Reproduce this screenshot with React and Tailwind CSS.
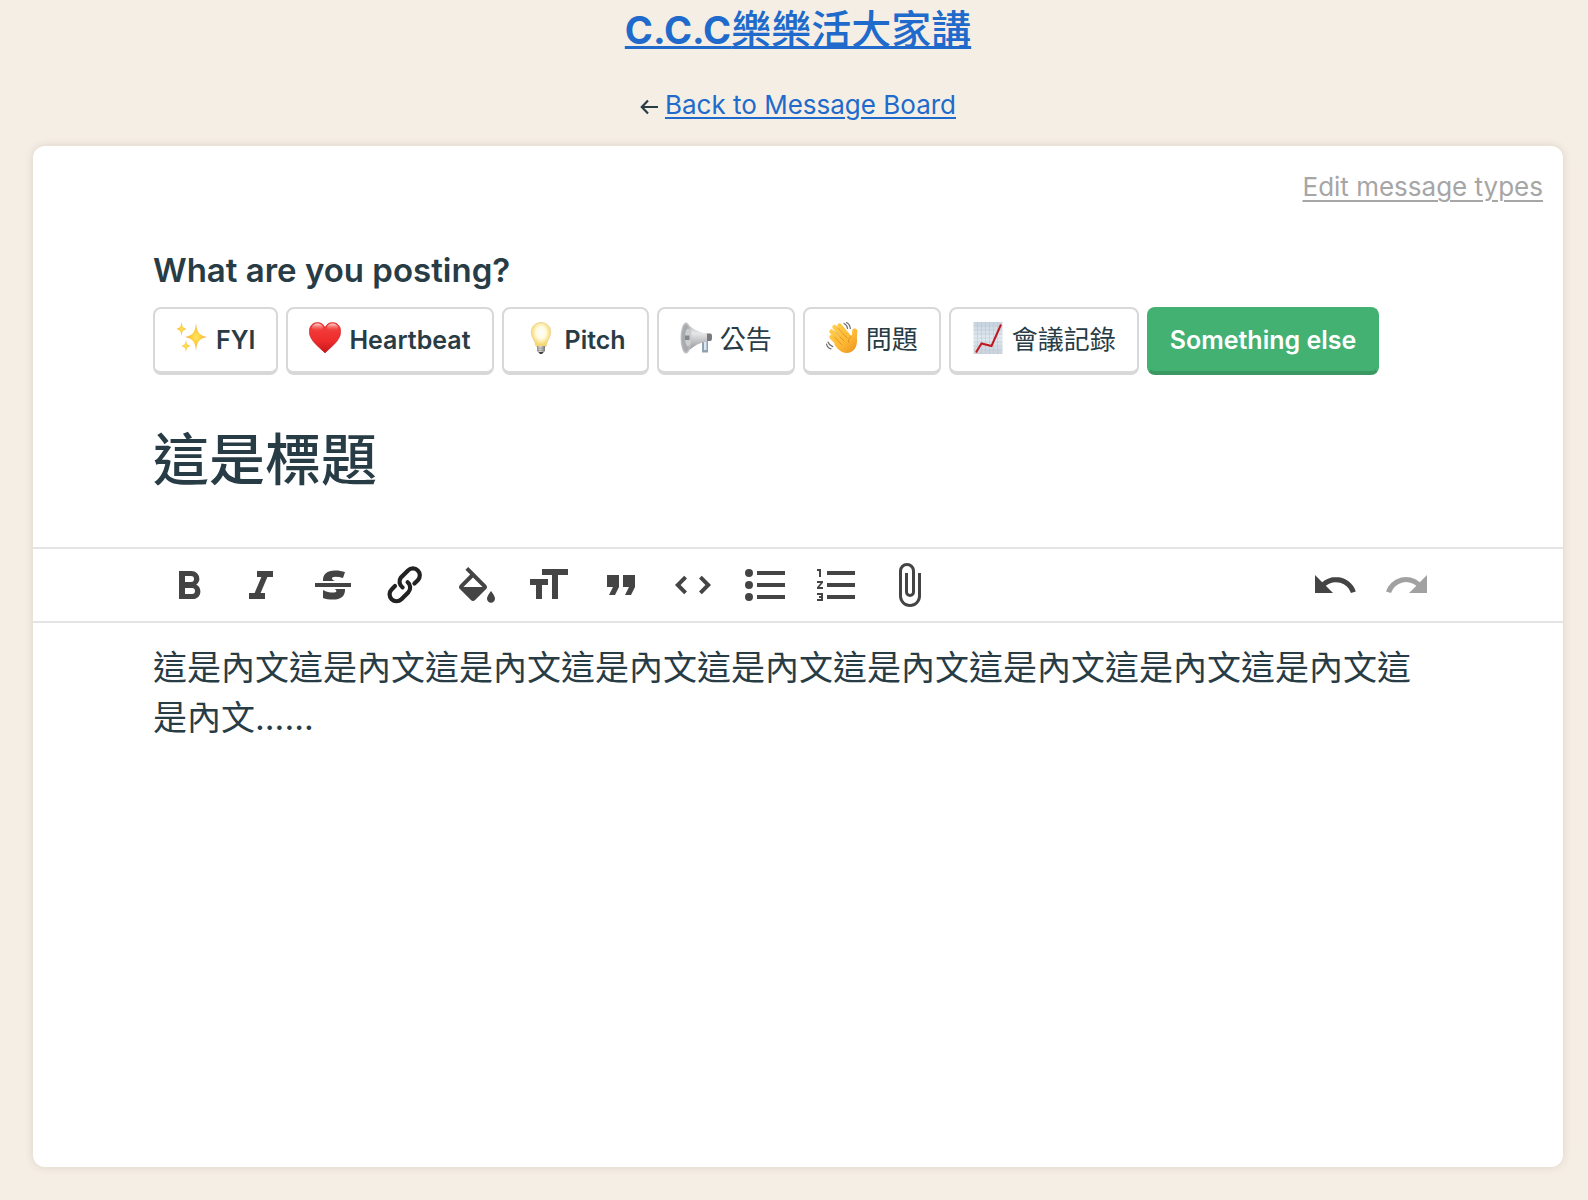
import React, { useState } from "react";

const BODY =
  "這是內文這是內文這是內文這是內文這是內文這是內文這是內文這是內文這是內文這是內文......";

function Sparkles() {
  return (
    <svg viewBox="0 0 32 32" className="mb-1 size-8" aria-hidden="true">
      <defs>
        <radialGradient id="spark">
          <stop offset="0" stopColor="#ffe45c" />
          <stop offset="0.5" stopColor="#fccb3c" />
          <stop offset="1" stopColor="#f3a45c" />
        </radialGradient>
      </defs>
      <g fill="url(#spark)">
        <path d="M20 1c.9 9 2.500 11.800 11 14-8.500 2.200-10.100 5-11 14-.9-9-2.500-11.800-11-14 8.500-2.200 10.100-5 11-14z" />
        <path d="M5.500 0c.6 4.500 1.500 5.900 5 7-3.500 1.100-4.400 2.500-5 7-.6-4.500-1.500-5.900-5-7 3.500-1.100 4.400-2.500 5-7z" />
        <path d="M10 18c.5 4 1.500 5.100 5 6-3.500.9-4.500 2-5 6-.5-4-1.500-5.100-5-6 3.500-.9 4.500-2 5-6z" />
      </g>
    </svg>
  );
}

function Heart() {
  return (
    <svg viewBox="0 0 32 32" className="mb-1 size-8" aria-hidden="true">
      <defs>
        <linearGradient id="heartFill" x1="0" y1="0" x2="0" y2="1">
          <stop offset="0" stopColor="#f4433f" />
          <stop offset="0.6" stopColor="#ee2c2c" />
          <stop offset="1" stopColor="#c4161c" />
        </linearGradient>
        <linearGradient id="heartShine" x1="0" y1="0" x2="0" y2="1">
          <stop offset="0" stopColor="#ffd9d4" />
          <stop offset="1" stopColor="#f4433f" stopOpacity="0" />
        </linearGradient>
      </defs>
      <path
        d="M16 31C11 25.500.3 19 .3 9.500.3 4 4 .6 8.500.6c3.500 0 6.100 1.900 7.500 5 1.400-3.100 4-5 7.500-5 4.500 0 8.200 3.400 8.200 8.900C31.700 19 21 25.500 16 31z"
        fill="url(#heartFill)"
        stroke="#c9181d"
        strokeWidth="0.6"
      />
      <ellipse cx="8.500" cy="5.500" rx="5.500" ry="4" fill="url(#heartShine)" />
      <ellipse cx="23.500" cy="5.500" rx="5.500" ry="4" fill="url(#heartShine)" />
    </svg>
  );
}

function Bulb() {
  return (
    <svg viewBox="0 0 32 32" className="mb-1 size-8" aria-hidden="true">
      <defs>
        <radialGradient id="bulbGlow" cx="0.5" cy="0.42">
          <stop offset="0" stopColor="#ffffff" />
          <stop offset="0.5" stopColor="#fffbe0" />
          <stop offset="1" stopColor="#f6d873" />
        </radialGradient>
        <linearGradient id="bulbBase">
          <stop offset="0" stopColor="#8f8f8d" />
          <stop offset="0.4" stopColor="#dededb" />
          <stop offset="1" stopColor="#77777a" />
        </linearGradient>
      </defs>
      <path
        d="M16 .5c5.800 0 9.700 4.300 9.700 9.700 0 5.400-3.700 7.600-4.700 14.300H11C10 17.800 6.300 15.600 6.300 10.200 6.300 4.800 10.200.5 16 .5z"
        fill="url(#bulbGlow)"
        stroke="#efd28a"
        strokeWidth="0.8"
      />
      <path d="M12 24h8v5l-2.500 2.500h-3L12 29z" fill="url(#bulbBase)" />
      <path d="M12 26.200h8M12 28.400h8" stroke="#8a8a88" strokeWidth="0.6" />
      <path d="M13.500 30h5l-1.500 2h-2z" fill="#3f3f42" />
    </svg>
  );
}

function Loudspeaker() {
  return (
    <svg viewBox="0 0 32 32" className="mb-1 size-8" aria-hidden="true">
      <defs>
        <linearGradient id="horn" x1="0" y1="0" x2="0" y2="1">
          <stop offset="0" stopColor="#aeb0b3" />
          <stop offset="0.35" stopColor="#e6e7e9" />
          <stop offset="1" stopColor="#858689" />
        </linearGradient>
      </defs>
      <path d="M22 15h6v15.500h-6z" fill="#8fa2b3" />
      <path d="M24 17h2.500v11H24z" fill="#dbe7f0" />
      <path d="M26 11.500h4.500c1 0 1.500 1 1.500 3.500s-.5 4-1.500 4H26z" fill="#77797d" />
      <path d="M5.500.5C11 5 16 10 27 11.500v8C16 21 11 27 5.500 31.500z" fill="url(#horn)" />
      <ellipse cx="6" cy="16" rx="5.500" ry="15.500" fill="#c2c3c6" />
      <ellipse cx="6" cy="16" rx="4.300" ry="13.800" fill="#a9aaad" />
      <ellipse cx="8" cy="15.500" rx="3" ry="9" fill="#cdced0" />
      <path d="M5 13.500h4.500v4.500H5z" fill="#85868a" />
    </svg>
  );
}

function Wave() {
  return (
    <svg viewBox="0 0 32 32" className="mb-1 size-8" aria-hidden="true">
      <defs>
        <linearGradient id="hand" gradientUnits="userSpaceOnUse" x1="4" y1="3" x2="28" y2="31">
          <stop offset="0" stopColor="#ffd04f" />
          <stop offset="0.6" stopColor="#fdb934" />
          <stop offset="1" stopColor="#ee9520" />
        </linearGradient>
      </defs>
      <g stroke="url(#hand)" strokeWidth="4.400" strokeLinecap="round">
        <path d="M5.500 9.500 15 20" />
        <path d="M8.500 5 19 17" />
        <path d="M13.500 3.500 23 15" />
        <path d="M5.500 15 13 23" />
      </g>
      <path
        d="M10 18 20 9.500l5.500 4.500c.8-1.700.5-4 .8-6 .3-2 4.400-2.300 4.900.3.5 2.600-.6 5.700-.2 9.200C31.500 24 28 31 20.500 31 15 31 10.500 26 8.500 22.500z"
        fill="url(#hand)"
      />
      <path
        d="M9 9.500l9 9.500M12 6l9 10M8.500 15l7 7.500M25.500 14c-2.500 2-3.500 4-3 6.500"
        fill="none"
        stroke="#dc8a1e"
        strokeWidth="0.8"
        strokeLinecap="round"
      />
      <path
        d="M18 1.500c2 1 3.300 2.800 3.500 5M20.500.5c2.300 1.200 3.700 3.200 3.800 6M.5 22c.5 2.500 2 4.200 4.500 4.800M2 20c.8 2.300 2.300 3.800 4.700 4.600"
        fill="none"
        stroke="#6b6b6b"
        strokeWidth="1.200"
        strokeLinecap="round"
      />
    </svg>
  );
}

function Chart() {
  return (
    <svg viewBox="0 0 32 32" className="mb-1 size-8" aria-hidden="true">
      <defs>
        <linearGradient id="paper" x1="0" y1="0" x2="0" y2="1">
          <stop offset="0" stopColor="#c5d3df" />
          <stop offset="0.5" stopColor="#e3ebf1" />
          <stop offset="1" stopColor="#c9d2da" />
        </linearGradient>
      </defs>
      <path d="M1.500 0h29v32h-29z" fill="url(#paper)" />
      <path
        d="M5.500 0v32M9.500 0v32M13.500 0v32M17.500 0v32M21.500 0v32M25.500 0v32M1.500 4h29M1.500 8h29M1.500 12h29M1.500 16h29M1.500 20h29M1.500 24h29M1.500 28h29"
        stroke="#b3c4d2"
        strokeWidth="0.5"
      />
      <path d="M4 30.500 9.500 21.500l10 2.500L29 2.500" fill="none" stroke="#c3161f" strokeWidth="2" />
    </svg>
  );
}

const TYPES = [
  { label: "FYI", Emoji: Sparkles },
  { label: "Heartbeat", Emoji: Heart },
  { label: "Pitch", Emoji: Bulb },
  { label: "公告", Emoji: Loudspeaker, cjk: true },
  { label: "問題", Emoji: Wave, cjk: true },
  { label: "會議記錄", Emoji: Chart, cjk: true },
  { label: "Something else" },
];

const TOOLS = [
  {
    name: "Bold",
    d: "M15.600 11.800c1-.7 1.600-1.800 1.600-2.800a4 4 0 0 0-4-4H7v14h7c2.100 0 3.700-1.700 3.700-3.800 0-1.500-.8-2.800-2.100-3.400zM10 7.500h3a1.500 1.500 0 1 1 0 3h-3v-3zm3.500 9H10v-3h3.500a1.500 1.500 0 1 1 0 3z",
  },
  { name: "Italic", d: "M10 5v3h2.200l-3.400 8H6v3h8v-3h-2.200l3.400-8H18V5h-8z" },
  {
    name: "Strikethrough",
    d: "M3 11h18v2H3zM7 10c-.2-3.400 2-5.300 6-5.300 2 0 3.700.3 5 .8l-1 3c-1.300-.4-2.600-.6-3.800-.6-1.200 0-1.700.4-1.700.9s.5.900 1.500 1.200zM12.800 14H18c.2 3.500-2 5.300-6 5.300-2 0-3.700-.3-5-.8v-4c1.700.9 3.400 1.300 4.700 1.300 1.300 0 2-.3 2-.8 0-.4-.3-.7-.9-1z",
  },
  { name: "Link", link: true },
  {
    name: "Color",
    d: "M16.560 11.940 7.620 3 6.210 4.410l2.380 2.380-5.150 5.150c-.59.59-.59 1.540 0 2.120l5.500 5.500c.29.29.68.44 1.060.44s.77-.15 1.060-.44l5.500-5.500c.59-.58.59-1.530 0-2.120zM5.210 13 10 8.210 14.790 13H5.210zM19 15s-2 2.400-2 3.900c0 1.100.9 2 2 2s2-.9 2-2c0-1.500-2-3.900-2-3.900z",
  },
  { name: "Heading", d: "M11.500 9v3h-3v7h-3v-7h-3V9h9zM8.500 4h13v3h-5v12h-3V7h-5V4z" },
  { name: "Quote", d: "M6 17h3l2-4V7H5v6h3zm8 0h3l2-4V7h-6v6h3z" },
  {
    name: "Code",
    d: "M18.200 12 15 15.200l1.400 1.400L21 12l-4.600-4.600L15 8.800l3.200 3.200zM5.800 12 9 8.800 7.600 7.400 3 12l4.600 4.600L9 15.200 5.800 12z",
  },
  {
    name: "Bullets",
    d: "M4 4a2 2 0 1 0 0 4 2 2 0 0 0 0-4zm0 6a2 2 0 1 0 0 4 2 2 0 0 0 0-4zm0 6a2 2 0 1 0 0 4 2 2 0 0 0 0-4zM8 5v2h14V5H8zm0 14h14v-2H8v2zm0-6h14v-2H8v2z",
  },
  {
    name: "Numbers",
    d: "M2 17h2v.5H3v1h1v.5H2v1h3v-4H2v1zm1-9h1V4H2v1h1v3zm-1 3h1.800L2 13.100v.9h3v-1H3.200L5 10.900V10H2v1zm5-6v2h14V5H7zm0 14h14v-2H7v2zm0-6h14v-2H7v2z",
  },
  {
    name: "Attach files",
    d: "M16.500 6v11.500c0 2.200-1.800 4-4 4s-4-1.800-4-4V5a2.500 2.500 0 0 1 5 0v10.500c0 .6-.5 1-1 1s-1-.4-1-1V6H10v9.500a2.500 2.500 0 0 0 5 0V5a4 4 0 1 0-8 0v12.500a5.500 5.500 0 0 0 11 0V6h-1.500z",
  },
];

const HISTORY = [
  {
    name: "Undo",
    d: "M12.500 8c-2.600 0-5 1-6.900 2.600L2 7v9h9l-3.600-3.600A8 8 0 0 1 20 16l2.400-.8a10.500 10.500 0 0 0-10-7.200z",
  },
  {
    name: "Redo",
    disabled: true,
    d: "M18.400 10.600a10.500 10.500 0 0 0-16.900 4.600L4 16a8 8 0 0 1 12.700-3.600L13 16h9V7l-3.600 3.600z",
  },
];

function ToolButton({ tool }) {
  return (
    <button
      type="button"
      aria-label={tool.name}
      disabled={tool.disabled}
      className="flex h-18 w-18 items-center justify-center text-[#444444] disabled:text-[#a1a1a1]"
    >
      <svg viewBox="0 0 24 24" className="size-12" fill="currentColor" aria-hidden="true">
        {tool.link ? (
          <g fill="none" stroke="#222222" strokeWidth="2.100" strokeLinecap="round">
            <path d="M16.700 11.300l1.700-1.700a3.450 3.450 0 0 0-4.900-4.900l-3.500 3.500a3.450 3.450 0 0 0 .8 5" />
            <path d="M7 12.500l-1.700 1.700a3.450 3.450 0 0 0 4.900 4.900l3.500-3.500a3.450 3.450 0 0 0-.4-5" />
          </g>
        ) : (
          <path d={tool.d} />
        )}
      </svg>
    </button>
  );
}

export default function App() {
  const [selected, setSelected] = useState("Something else");
  const [title, setTitle] = useState("這是標題");
  const [body, setBody] = useState(BODY);

  return (
    <div className="flex min-h-screen flex-col bg-[#f5eee5] pr-[25px] pb-[33px] pl-[33px] font-['Inter','Noto_Sans_CJK_TC',sans-serif] text-[#283c46]">
      <header className="flex flex-col items-center">
        <h1 className="text-[40px] leading-[60px] font-medium">
          <a href="#project" className="text-[#206acb] underline decoration-[3px] underline-offset-2">
            <span className="text-[38px] font-bold">C.C.C</span>樂樂活大家講
          </a>
        </h1>
        <nav className="mt-[25px] mb-[21px] flex items-center gap-[7px] text-[26px] leading-10">
          <svg viewBox="0 0 18 16" className="mt-1 h-4 w-[18px]" fill="none" stroke="currentColor" strokeWidth="2.200" aria-hidden="true">
            <path d="M8 1.500 1.800 8 8 14.500M2 8h16" />
          </svg>
          <a href="#board" className="text-[#206acb] underline decoration-2 underline-offset-3">
            Back to Message Board
          </a>
        </nav>
      </header>

      <main className="flex grow flex-col rounded-xl bg-white shadow-[0_0_8px_rgba(70,60,20,0.14)]">
        <div className="flex justify-end px-5 pt-[21px]">
          <a href="#types" className="text-[26px] leading-10 text-[#a6a6a6] underline decoration-2 underline-offset-4">
            Edit message types
          </a>
        </div>

        <section className="px-30 pt-[39px]">
          <h2 className="text-[33px] leading-12 font-semibold">What are you posting?</h2>
          <div className="mt-[13px] flex flex-wrap gap-2">
            {TYPES.map(({ label, Emoji, cjk }) => (
              <button
                key={label}
                type="button"
                aria-pressed={selected === label}
                onClick={() => setSelected(label)}
                className="flex h-[68px] items-center gap-2 rounded-lg border-2 border-b-4 border-[#d8d8d8] px-[21px] text-[25px] leading-8 font-semibold aria-pressed:border-x-[#43b172] aria-pressed:border-t-[#43b172] aria-pressed:border-b-[#3c9862] aria-pressed:bg-[#43b172] aria-pressed:text-white"
              >
                {Emoji && <Emoji />}
                <span className={cjk ? "text-[26px] font-normal" : undefined}>{label}</span>
              </button>
            ))}
          </div>
          <input
            aria-label="Title"
            value={title}
            onChange={(e) => setTitle(e.target.value)}
            className="mt-[43px] mb-[45px] block h-21 w-full text-[56px] font-medium outline-none"
          />
        </section>

        <div role="toolbar" aria-label="Formatting" className="flex justify-between border-y-2 border-[#e4e4e4] px-30">
          <div className="flex">
            {TOOLS.map((tool) => (
              <ToolButton key={tool.name} tool={tool} />
            ))}
          </div>
          <div className="flex">
            {HISTORY.map((tool) => (
              <ToolButton key={tool.name} tool={tool} />
            ))}
          </div>
        </div>

        <textarea
          aria-label="Message"
          value={body}
          onChange={(e) => setBody(e.target.value)}
          className="block w-full grow resize-none px-30 pt-5 text-[34px] leading-[50px] outline-none"
        />
      </main>
    </div>
  );
}
